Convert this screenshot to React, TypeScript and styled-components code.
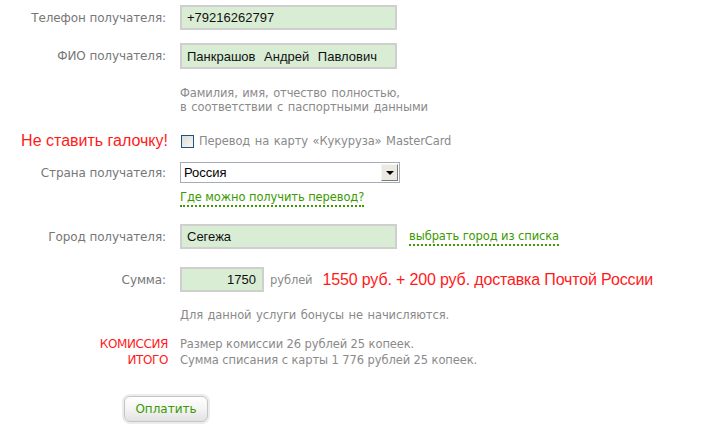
import React from "react";
import styled, { createGlobalStyle } from "styled-components";

const GlobalStyle = createGlobalStyle`
    html, body {
        margin: 0;
        padding: 0;
        background: #ffffff;
    }
    body {
        font-family: Verdana, "DejaVu Sans", sans-serif;
    }
`
const Form = styled.div`
    width: 713px;
    height: 429px;
    padding-top: 5px;
    box-sizing: border-box;
    display: flex;
    flex-direction: column;
    overflow: hidden;
`
const Row = styled.div<{ $mt?: number; $h?: number }>`
    display: flex;
    align-items: center;
    margin-top: ${(p) => p.$mt ?? 0}px;
    min-height: ${(p) => p.$h ?? 0}px;
`
const Label = styled.div`
    width: 166px;
    margin-right: 14px;
    text-align: right;
    font-size: 12px;
    color: #777777;
    letter-spacing: -0.1px;
    flex-shrink: 0;
`
const Warning = styled.div`
    width: 168px;
    margin-right: 12px;
    text-align: right;
    font-family: "Liberation Sans", Arial, sans-serif;
    font-size: 16px;
    color: #ff1a1a;
    flex-shrink: 0;
`
const Field = styled.div<{ $w: number; $right?: boolean }>`
    width: ${(p) => p.$w}px;
    height: 25px;
    box-sizing: border-box;
    border: 2px solid #cfcfcf;
    background: #d9edd5;
    display: flex;
    align-items: center;
    justify-content: ${(p) => (p.$right ? "flex-end" : "flex-start")};
    padding: 0 6px 0 5px;
    font-family: "Liberation Sans", Arial, sans-serif;
    font-size: 13px;
    color: #111111;
    word-spacing: 5px;
    white-space: pre;
    flex-shrink: 0;
`
const Hint = styled.div<{ $mt: number }>`
    margin-top: ${(p) => p.$mt}px;
    padding-left: 180px;
    font-size: 11.5px;
    line-height: 14px;
    letter-spacing: -0.1px;
    word-spacing: 1px;
    color: #8a8a8a;
`
const Checkbox = styled.span`
    width: 13px;
    height: 13px;
    box-sizing: border-box;
    border: 1px solid #1d5281;
    background: linear-gradient(135deg, #dcdcd6 0%, #f6f6f3 100%);
    margin-left: 1px;
    margin-right: 5px;
    flex-shrink: 0;
`
const CheckText = styled.span`
    font-size: 11.5px;
    letter-spacing: -0.1px;
    word-spacing: 1px;
    color: #8a8a8a;
`
const Select = styled.div`
    width: 220px;
    height: 21px;
    box-sizing: border-box;
    border: 1px solid #a5acb5;
    background: #ffffff;
    display: flex;
    align-items: center;
    padding: 1px 1px 1px 3px;
    font-family: "Liberation Sans", Arial, sans-serif;
    font-size: 13px;
    color: #000000;
    flex-shrink: 0;
`
const SelectValue = styled.span`
    flex: 1;
`
const DropButton = styled.span`
    width: 17px;
    height: 17px;
    box-sizing: border-box;
    background: #ece9e2;
    border-top: 1px solid #f5f5f5;
    border-left: 1px solid #f5f5f5;
    border-right: 1px solid #7a7a7a;
    border-bottom: 1px solid #7a7a7a;
    display: flex;
    align-items: center;
    justify-content: center;
`
const Arrow = styled.span`
    width: 0;
    height: 0;
    border-left: 4px solid transparent;
    border-right: 4px solid transparent;
    border-top: 4px solid #000000;
    margin-top: 1px;
`
const DottedLink = styled.a<{ $ml?: number }>`
    margin-left: ${(p) => p.$ml ?? 0}px;
    font-size: 11.5px;
    line-height: 16px;
    letter-spacing: -0.1px;
    color: #3c9a00;
    text-decoration: none;
    border-bottom: 2px dotted #3c9a00;
    cursor: pointer;
`
const LinkRow = styled.div<{ $mt: number }>`
    margin-top: ${(p) => p.$mt}px;
    padding-left: 180px;
    display: flex;
`
const Unit = styled.span`
    margin-left: 6px;
    font-size: 11.5px;
    letter-spacing: -0.1px;
    color: #8a8a8a;
`
const Notice = styled.span`
    margin-left: 10px;
    font-family: "Liberation Sans", Arial, sans-serif;
    font-size: 16px;
    letter-spacing: -0.15px;
    color: #ff1a1a;
    white-space: nowrap;
`
const Summary = styled.div<{ $mt: number }>`
    margin-top: ${(p) => p.$mt}px;
    display: grid;
    grid-template-columns: 168px 1fr;
    column-gap: 12px;
    line-height: 16px;
`
const SummaryKey = styled.div`
    text-align: right;
    font-size: 12px;
    letter-spacing: -0.4px;
    color: #ff1a1a;
`
const SummaryValue = styled.div`
    font-size: 11.5px;
    letter-spacing: -0.1px;
    color: #8a8a8a;
`
const PayButton = styled.button`
    margin-top: 28px;
    margin-left: 124px;
    width: 84px;
    height: 26px;
    border: 1px solid #c4c4c4;
    border-radius: 6px;
    background: linear-gradient(#ffffff 0%, #f4f4f4 50%, #e2e2e2 100%);
    box-shadow: 0 0 0 2px #ececec;
    font-family: Verdana, "DejaVu Sans", sans-serif;
    font-size: 12px;
    color: #3c9a00;
    padding: 0;
    cursor: pointer;
    align-self: flex-start;
`

function App() {
    return (
        <Form>
            <GlobalStyle />
            <Row>
                <Label>Телефон получателя:</Label>
                <Field $w={217}>+79216262797</Field>
            </Row>
            <Row $mt={13}>
                <Label>ФИО получателя:</Label>
                <Field $w={217} style={{ height: 26 }}>Панкрашов Андрей Павлович</Field>
            </Row>
            <Hint $mt={17}>
                Фамилия, имя, отчество полностью,
                <br />
                в соответствии с паспортными данными
            </Hint>
            <Row $mt={17} $h={20}>
                <Warning>Не ставить галочку!</Warning>
                <Checkbox />
                <CheckText>Перевод на карту «Кукуруза» MasterCard</CheckText>
            </Row>
            <Row $mt={11}>
                <Label>Страна получателя:</Label>
                <Select>
                    <SelectValue>Россия</SelectValue>
                    <DropButton>
                        <Arrow />
                    </DropButton>
                </Select>
            </Row>
            <LinkRow $mt={6}>
                <DottedLink>Где можно получить перевод?</DottedLink>
            </LinkRow>
            <Row $mt={17}>
                <Label>Город получателя:</Label>
                <Field $w={217}>Сегежа</Field>
                <DottedLink $ml={12}>выбрать город из списка</DottedLink>
            </Row>
            <Row $mt={18}>
                <Label>Сумма:</Label>
                <Field $w={84} $right>1750</Field>
                <Unit>рублей</Unit>
                <Notice>1550 руб. + 200 руб. доставка Почтой России</Notice>
            </Row>
            <Hint $mt={16}>Для данной услуги бонусы не начисляются.</Hint>
            <Summary $mt={14}>
                <SummaryKey>КОМИССИЯ</SummaryKey>
                <SummaryValue>Размер комиссии 26 рублей 25 копеек.</SummaryValue>
                <SummaryKey>ИТОГО</SummaryKey>
                <SummaryValue>Сумма списания с карты 1 776 рублей 25 копеек.</SummaryValue>
            </Summary>
            <PayButton>Оплатить</PayButton>
        </Form>
    )
}

export default App;
